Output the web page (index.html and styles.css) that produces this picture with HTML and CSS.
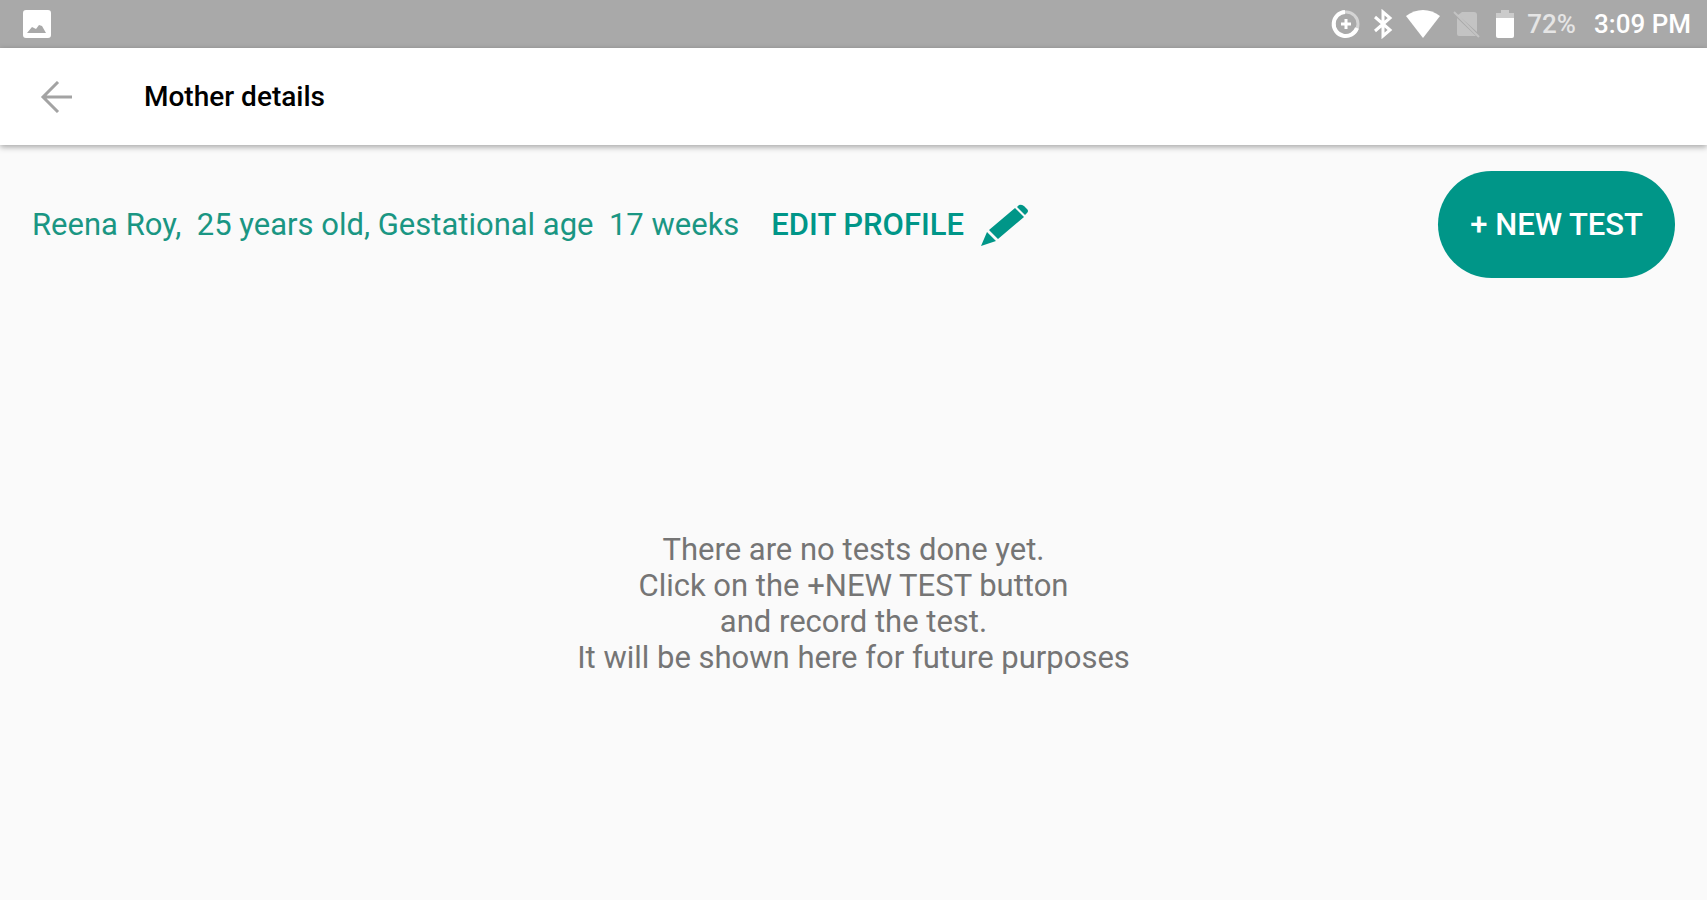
FILE: index.html
```html
<!DOCTYPE html>
<html lang="en">
  <head>
    <meta charset="UTF-8" />
    <meta name="viewport" content="width=device-width, initial-scale=1.0" />
    <title>Mother details</title>
    <link rel="stylesheet" href="styles.css">
  </head>
  <body>
    <div class="status-bar">
      <svg class="icon-image" viewBox="0 0 28 28">
        <path fill="#fff" fill-rule="evenodd" d="M3 0h22a3 3 0 0 1 3 3v22a3 3 0 0 1-3 3H3a3 3 0 0 1-3-3V3a3 3 0 0 1 3-3zM4 23h19l-4-7-3-1-3 4-4-2z" />
      </svg>
      <div class="status-icons">
        <svg class="icon-saver" viewBox="0 0 30 30" fill="none" stroke="#fff">
          <circle cx="15" cy="15" r="12" stroke-width="3" opacity="0.5" />
          <path stroke-width="4" d="M14 3a12 12 0 1 0 12 16" />
          <path stroke-width="3" d="M15 10v10M10 15h10" />
        </svg>
        <svg class="icon-bluetooth" viewBox="0 0 20 30" fill="none" stroke="#fff" stroke-width="3">
          <path d="M2 8l15 13-7 6V3l7 6L2 22" />
        </svg>
        <svg class="icon-wifi" viewBox="0 0 36 28">
          <path fill="#fff" d="M1 6C11-2 25-2 35 6L18 28z" />
        </svg>
        <svg class="icon-sim" viewBox="0 0 28 30">
          <path fill="#fff" opacity="0.3" d="M9 3h12a3 3 0 0 1 3 3v17L5 6zM4 9l19 18H6a2 2 0 0 1-2-2z" />
          <path stroke="#fff" stroke-width="2" opacity="0.3" d="M1 3l25 25" />
        </svg>
        <svg class="icon-battery" viewBox="0 0 20 28">
          <path fill="#fff" opacity="0.4" d="M6 0h8v3h5v6H1V3h5z" />
          <path fill="#fff" d="M1 8h18v18a2 2 0 0 1-2 2H3a2 2 0 0 1-2-2z" />
        </svg>
        <span class="battery-level">72%</span>
        <span class="clock">3:09 PM</span>
      </div>
    </div>

    <header class="app-bar">
      <button type="button" class="back-btn" aria-label="Back">
        <svg viewBox="0 0 32 32" fill="none" stroke="#a3a3a3" stroke-width="3">
          <path d="M32 16H3M18 1L3 16l15 15" />
        </svg>
      </button>
      <h1>Mother details</h1>
    </header>

    <main>
      <div class="profile-row">
        <p class="profile-info">Reena Roy,&nbsp; 25 years old, Gestational age&nbsp; 17 weeks</p>
        <button type="button" class="edit-btn">
          EDIT PROFILE
          <svg viewBox="0 0 48 44" fill="#009688">
            <path d="M37 4l2-2q2-1 5 1l3 3q2 2 0 4l-2 2zM35 5l9 9L18 36l-9-9zM7 29l9 9L1 43z" />
          </svg>
        </button>
        <button type="button" class="new-test-btn">+ NEW TEST</button>
      </div>
      <p class="empty-message">
        There are no tests done yet.<br>
        Click on the +NEW TEST button<br>
        and record the test.<br>
        It will be shown here for future purposes
      </p>
    </main>
  </body>
</html>
```
FILE: styles.css
```css
* {
  box-sizing: border-box;
}

body {
  margin: 0;
  min-height: 100vh;
  display: flex;
  flex-direction: column;
  font-family: Roboto, sans-serif;
  background-color: #fafafa;
}

h1,
p {
  margin: 0;
}

button {
  font-family: inherit;
  border: none;
  background: none;
  padding: 0;
  cursor: pointer;
}

svg {
  display: block;
  flex-shrink: 0;
}

/* Status bar */
.status-bar {
  display: flex;
  justify-content: space-between;
  align-items: center;
  height: 48px;
  padding: 0 16px 0 23px;
  background-color: #a9a9a9;
  color: #fff;
  font-size: 26px;
  font-weight: 500;
}

.status-icons {
  display: flex;
  align-items: center;
}

.icon-image {
  width: 28px;
  height: 28px;
}

.icon-saver {
  width: 30px;
  height: 30px;
  margin-right: 12px;
}

.icon-bluetooth {
  width: 20px;
  height: 30px;
  margin-right: 12px;
}

.icon-wifi {
  width: 36px;
  height: 28px;
  margin-right: 12px;
}

.icon-sim {
  width: 28px;
  height: 30px;
  margin-right: 14px;
}

.icon-battery {
  width: 20px;
  height: 28px;
  margin-right: 12px;
}

.battery-level {
  margin-right: 18px;
  opacity: 0.7;
}

/* App bar */
.app-bar {
  display: flex;
  align-items: center;
  height: 97px;
  padding: 0 40px;
  background-color: #fff;
  box-shadow: 0 2px 6px rgba(0, 0, 0, 0.35);
}

.back-btn {
  margin-right: 72px;
}

.back-btn svg {
  width: 32px;
  height: 32px;
}

.app-bar h1 {
  font-size: 28px;
  font-weight: 500;
  color: #000;
}

/* Mother profile */
main {
  flex: 1;
  display: flex;
  flex-direction: column;
}

.profile-row {
  display: flex;
  align-items: center;
  padding: 26px 32px 0;
}

.profile-info {
  color: #1a9683;
  font-size: 31px;
}

.edit-btn {
  display: flex;
  align-items: center;
  gap: 16px;
  margin-left: 32px;
  color: #009688;
  font-size: 31px;
  font-weight: 500;
}

.edit-btn svg {
  width: 48px;
  height: 44px;
}

.new-test-btn {
  margin-left: auto;
  height: 107px;
  padding: 0 32px;
  border-radius: 54px;
  background-color: #009688;
  color: #fff;
  font-size: 31px;
  font-weight: 500;
}

.empty-message {
  margin: auto;
  padding-top: 30px;
  text-align: center;
  color: #757575;
  font-size: 31px;
  line-height: 36px;
}
```
